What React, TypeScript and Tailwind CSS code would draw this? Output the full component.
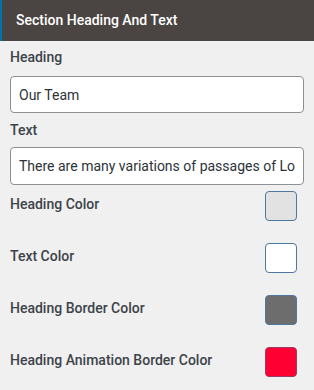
const swatches = [
    { label: 'Heading Color', color: 'bg-[#e2e2e2]', border: 'border-[#4f77a0]' },
    { label: 'Text Color', color: 'bg-white', border: 'border-[#4f77a0]' },
    { label: 'Heading Border Color', color: 'bg-[#6d6d6d]', border: 'border-[#4f77a0]' },
    { label: 'Heading Animation Border Color', color: 'bg-[#ff0033]', border: 'border-[#9a3c6a]' },
];

const App = () => {
    return (
        <div className="w-[314px] h-[390px] bg-[#f0f0f0] font-['Roboto',sans-serif] overflow-hidden">
            {/* Panel header */}
            <div className="h-[41px] bg-[#4a4542] border-l-2 border-[#0073aa] flex items-center pl-[14px]">
                <span className="text-white text-[14px] font-medium">Section Heading And Text</span>
            </div>

            <div className="px-[10px] pt-[6px]">
                <label className="block text-[14px] leading-5 font-medium text-[#3c434a]">Heading</label>
                <input
                    readOnly
                    value="Our Team"
                    className="mt-[9px] block w-full h-[37px] bg-white border border-[#8c8f94] rounded-[4px] px-[8px] text-[14px] text-[#2c3338] outline-none"
                />

                <label className="block mt-[7px] text-[14px] leading-5 font-medium text-[#3c434a]">Text</label>
                <input
                    readOnly
                    value="There are many variations of passages of Lorem Ipsum available"
                    className="mt-[7px] block w-full h-[38px] bg-white border border-[#8c8f94] rounded-[4px] px-[8px] text-[14px] text-[#2c3338] outline-none"
                />

                <div className="mt-[6px] flex flex-col gap-[22px]">
                    {swatches.map((s) => (
                        <div key={s.label} className="flex items-start justify-between">
                            <span className="pt-[3px] text-[14px] leading-5 font-medium text-[#3c434a]">{s.label}</span>
                            <div className={`w-[32px] h-[30px] mr-[7px] rounded-[4px] border ${s.border} ${s.color}`}></div>
                        </div>
                    ))}
                </div>
            </div>
        </div>
    );
};

export default App;
